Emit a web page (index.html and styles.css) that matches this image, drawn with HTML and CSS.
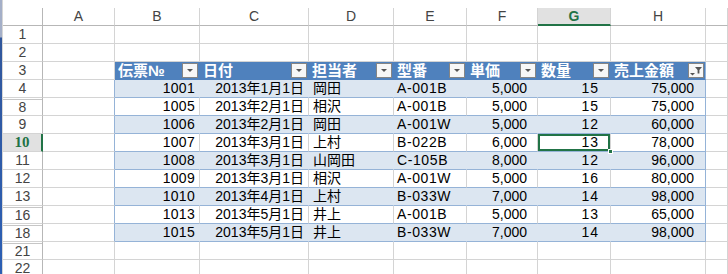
FILE: index.html
```html
<!DOCTYPE html>
<html lang="ja">
<head>
    <meta charset="UTF-8">
    <title>売上一覧</title>
    <link rel="stylesheet" href="styles.css">
</head>
<body>
<div class="window">
    <div class="edge"></div>
    <div class="main">
        <!-- 数式バーの下端 -->
        <div class="formula-strip">
            <div class="namebox"></div>
            <div class="formula"></div>
        </div>
        <div class="sheet">
            <!-- 列見出し -->
            <div class="c corner"></div>
            <div class="c ch">A</div>
            <div class="c ch">B</div>
            <div class="c ch">C</div>
            <div class="c ch">D</div>
            <div class="c ch">E</div>
            <div class="c ch">F</div>
            <div class="c ch sel">G</div>
            <div class="c ch">H</div>
            <div class="c ch"></div>

            <!-- 1 -->
            <div class="c rh">1</div>
            <div class="c"></div><div class="c"></div><div class="c"></div><div class="c"></div><div class="c"></div>
            <div class="c"></div><div class="c"></div><div class="c"></div><div class="c"></div>
            <!-- 2 -->
            <div class="c rh">2</div>
            <div class="c"></div><div class="c"></div><div class="c"></div><div class="c"></div><div class="c"></div>
            <div class="c"></div><div class="c"></div><div class="c"></div><div class="c"></div>

            <!-- 3 テーブル見出し -->
            <div class="c rh">3</div>
            <div class="c"></div>
            <div class="c th">伝票№<span class="dd"></span></div>
            <div class="c th">日付<span class="dd"></span></div>
            <div class="c th">担当者<span class="dd"></span></div>
            <div class="c th">型番<span class="dd"></span></div>
            <div class="c th">単価<span class="dd"></span></div>
            <div class="c th">数量<span class="dd"></span></div>
            <div class="c th last">売上金額<span class="dd filter">
                <svg width="14" height="13" viewBox="0 0 14 13">
                    <path d="M6 3h7l-2.6 3v3.5h-1.8V6z" fill="#555"/>
                    <path d="M1 9h5l-2.5 2.5z" fill="#555"/>
                </svg>
            </span></div>
            <div class="c"></div>

            <!-- データ -->
            <div class="c rh">4</div>
            <div class="c tl"></div>
            <div class="c td band no">1001</div><div class="c td band dt">2013年1月1日</div><div class="c td band tx">岡田</div><div class="c td band code">A-001B</div><div class="c td band f">5,000</div><div class="c td band g">15</div><div class="c td band h">75,000</div>
            <div class="c"></div>

            <div class="c rh gap">8</div>
            <div class="c tl"></div>
            <div class="c td no">1005</div><div class="c td dt">2013年2月1日</div><div class="c td tx">相沢</div><div class="c td code">A-001B</div><div class="c td f">5,000</div><div class="c td g">15</div><div class="c td h">75,000</div>
            <div class="c"></div>

            <div class="c rh">9</div>
            <div class="c tl"></div>
            <div class="c td band no">1006</div><div class="c td band dt">2013年2月1日</div><div class="c td band tx">岡田</div><div class="c td band code">A-001W</div><div class="c td band f">5,000</div><div class="c td band g">12</div><div class="c td band h">60,000</div>
            <div class="c"></div>

            <div class="c rh sel">10</div>
            <div class="c tl"></div>
            <div class="c td no">1007</div><div class="c td dt">2013年3月1日</div><div class="c td tx">上村</div><div class="c td code">B-022B</div><div class="c td f">6,000</div><div class="c td g active">13</div><div class="c td h">78,000</div>
            <div class="c"></div>

            <div class="c rh">11</div>
            <div class="c tl"></div>
            <div class="c td band no">1008</div><div class="c td band dt">2013年3月1日</div><div class="c td band tx">山岡田</div><div class="c td band code">C-105B</div><div class="c td band f">8,000</div><div class="c td band g">12</div><div class="c td band h">96,000</div>
            <div class="c"></div>

            <div class="c rh">12</div>
            <div class="c tl"></div>
            <div class="c td no">1009</div><div class="c td dt">2013年3月1日</div><div class="c td tx">相沢</div><div class="c td code">A-001W</div><div class="c td f">5,000</div><div class="c td g">16</div><div class="c td h">80,000</div>
            <div class="c"></div>

            <div class="c rh">13</div>
            <div class="c tl"></div>
            <div class="c td band no">1010</div><div class="c td band dt">2013年4月1日</div><div class="c td band tx">上村</div><div class="c td band code">B-033W</div><div class="c td band f">7,000</div><div class="c td band g">14</div><div class="c td band h">98,000</div>
            <div class="c"></div>

            <div class="c rh gap">16</div>
            <div class="c tl"></div>
            <div class="c td no">1013</div><div class="c td dt">2013年5月1日</div><div class="c td tx">井上</div><div class="c td code">A-001B</div><div class="c td f">5,000</div><div class="c td g">13</div><div class="c td h">65,000</div>
            <div class="c"></div>

            <div class="c rh gap">18</div>
            <div class="c tl"></div>
            <div class="c td band no">1015</div><div class="c td band dt">2013年5月1日</div><div class="c td band tx">井上</div><div class="c td band code">B-033W</div><div class="c td band f">7,000</div><div class="c td band g">14</div><div class="c td band h">98,000</div>
            <div class="c"></div>

            <!-- 21, 22 -->
            <div class="c rh gap">21</div>
            <div class="c"></div><div class="c"></div><div class="c"></div><div class="c"></div><div class="c"></div>
            <div class="c"></div><div class="c"></div><div class="c"></div><div class="c"></div>
            <div class="c rh">22</div>
            <div class="c"></div><div class="c"></div><div class="c"></div><div class="c"></div><div class="c"></div>
            <div class="c"></div><div class="c"></div><div class="c"></div><div class="c"></div>
        </div>
    </div>
</div>
</body>
</html>
```

FILE: styles.css
```css
body {
    margin: 0;
    padding: 0;
    background: #fff;
    font-family: 'Liberation Sans', 'Noto Sans CJK JP', sans-serif;
    overflow: hidden;
}
.window {
    display: flex;
    height: 274px;
}
.edge {
    width: 3px;
    flex: none;
    background:
        linear-gradient(to right, transparent 2px, #d6d6d6 2px),
        linear-gradient(to bottom, #a4afc8 0, #a4afc8 37px, #31579c 38px, #2c5fb4 100%);
}
.main {
    flex: 1;
    display: flex;
    flex-direction: column;
}
.formula-strip {
    height: 3px;
    display: flex;
    gap: 3px;
    margin-bottom: 8px;
}
.namebox {
    width: 43px;
    background: #e6e6e6;
}
.formula {
    flex: 1;
    background: #e6e6e6;
}

/* シート */
.sheet {
    display: grid;
    grid-template-columns: 40px 72px 85px 109px 85px 73px 71px 73px 95px 22px;
    grid-auto-rows: 18px;
}
.c {
    box-sizing: border-box;
    border-right: 1px solid #d4d4d4;
    border-bottom: 1px solid #d4d4d4;
    font-size: 14px;
    line-height: 17px;
    color: #000;
    white-space: nowrap;
    position: relative;
}
.corner {
    border-right-color: #b7b7b7;
    border-bottom-color: #b7b7b7;
}
.ch {
    text-align: center;
    color: #444;
    font-size: 14px;
    border-bottom-color: #b7b7b7;
    border-right-color: #d4d4d4;
}
.ch.sel {
    background: #e1e1e1;
    color: #217346;
    font-weight: bold;
    border-bottom: 2px solid #217346;
}
.rh {
    text-align: center;
    color: #444;
    font-size: 14px;
    border-right-color: #b7b7b7;
}
.rh.gap {
    box-shadow: inset 0 1px 0 #fff, inset 0 2px 0 #c6c6c6;
    line-height: 19px;
}
.rh.sel {
    background: #e1e1e1;
    color: #217346;
    font-weight: bold;
    font-family: 'Liberation Serif', serif;
    font-size: 15px;
    border-right: 2px solid #217346;
}

/* テーブル見出し */
.th {
    background: #4f81bd;
    border-right-color: #4f81bd;
    border-bottom-color: #4f81bd;
    color: #fff;
    font-weight: bold;
    font-size: 15px;
    line-height: 17px;
    padding-left: 3px;
}
.th.last {
    border-right-color: #95b3d7;
}
.dd {
    position: absolute;
    right: 1px;
    top: 1px;
    width: 16px;
    height: 15px;
    box-sizing: border-box;
    background: #f7f7f7;
    border: 1px solid #858585;
}
.dd::after {
    content: '';
    position: absolute;
    left: 4px;
    top: 5px;
    border-left: 3px solid transparent;
    border-right: 3px solid transparent;
    border-top: 3px solid #555;
}
.dd.filter::after {
    display: none;
}
.dd svg {
    display: block;
}

/* テーブル本体 */
.tl {
    border-right-color: #95b3d7;
}
.td {
    border-bottom-color: #95b3d7;
}
.td.band {
    background: #dce6f1;
    border-right-color: #dce6f1;
}
.td.h {
    border-right-color: #95b3d7;
}
.no {
    text-align: right;
    padding-right: 4px;
    letter-spacing: 0.3px;
}
.dt {
    text-align: right;
    padding-right: 4px;
}
.tx {
    padding-left: 4px;
}
.code {
    padding-left: 3px;
    letter-spacing: 0.6px;
}
.f {
    text-align: right;
    padding-right: 10px;
}
.g {
    text-align: right;
    padding-right: 11px;
    letter-spacing: 1px;
}
.h {
    text-align: right;
    padding-right: 11px;
}

/* 選択セル */
.active {
    box-shadow: inset 0 0 0 2px #217346;
}
.active::after {
    content: '';
    position: absolute;
    right: -3px;
    bottom: -3px;
    width: 5px;
    height: 5px;
    background: #217346;
    border: 1px solid #fff;
    box-sizing: border-box;
    z-index: 2;
}
```
